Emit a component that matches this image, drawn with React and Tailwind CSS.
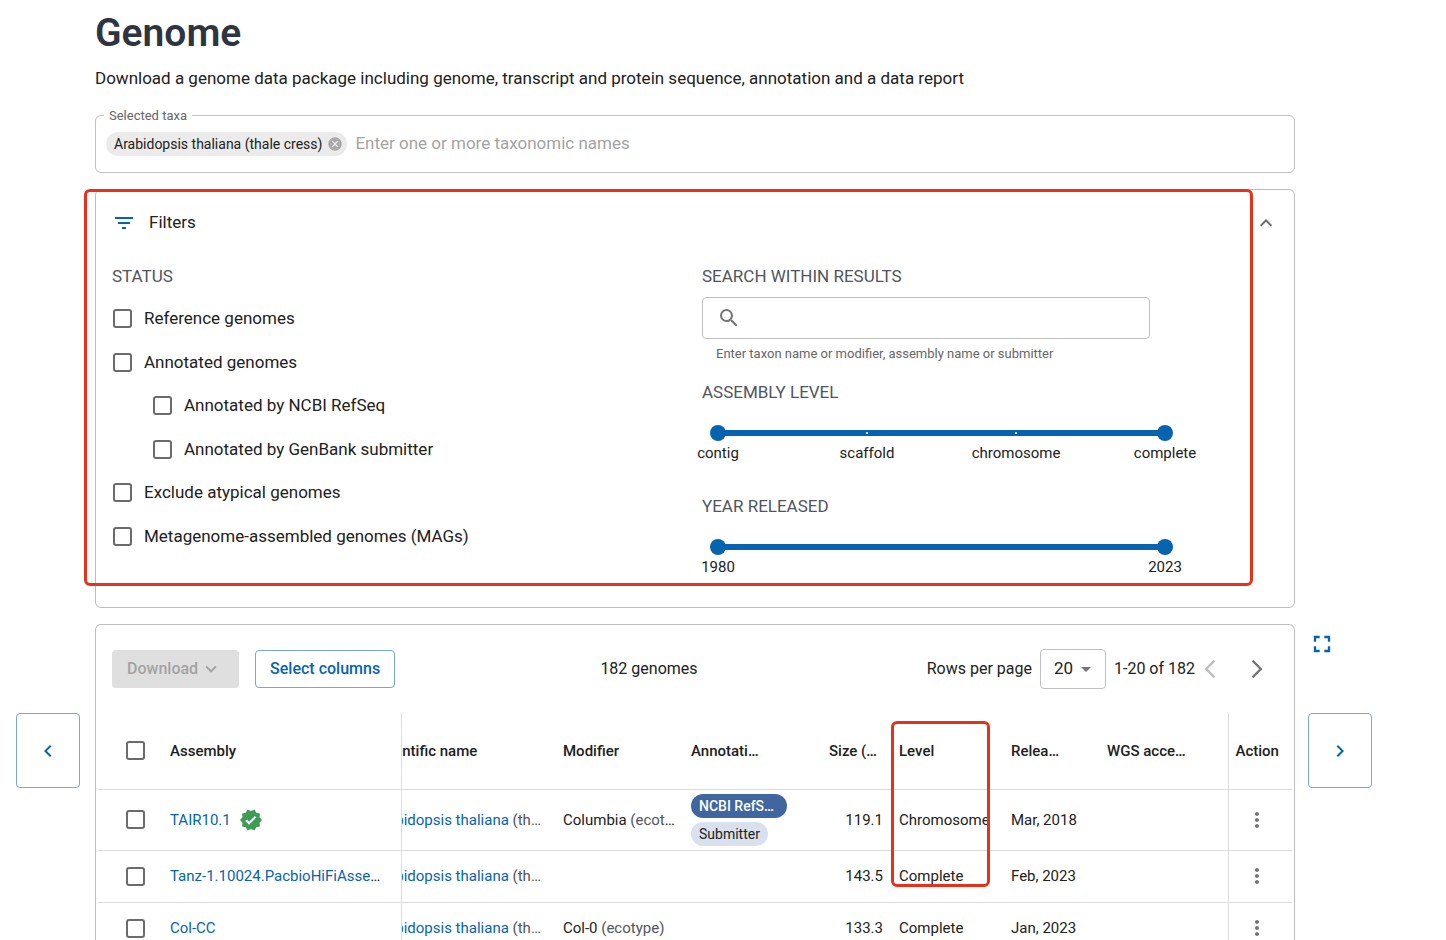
import {
  MdArrowBackIosNew,
  MdArrowDropDown,
  MdArrowForwardIos,
  MdCancel,
  MdFilterList,
  MdFullscreen,
  MdKeyboardArrowDown,
  MdKeyboardArrowLeft,
  MdKeyboardArrowRight,
  MdKeyboardArrowUp,
  MdMoreVert,
  MdSearch,
  MdVerified,
} from "react-icons/md";

const checkboxClass =
  "block size-[19px] shrink-0 appearance-none rounded-[3px] border-2 border-[#6b6b6b] bg-white checked:bg-[#0663b0]";

const rangeClass =
  "pointer-events-none absolute inset-0 h-4 w-full appearance-none bg-transparent [&::-webkit-slider-thumb]:pointer-events-auto [&::-webkit-slider-thumb]:size-4 [&::-webkit-slider-thumb]:appearance-none [&::-webkit-slider-thumb]:rounded-full [&::-webkit-slider-thumb]:bg-[#0663b0]";

const statusFilters = [
  { id: "reference", label: "Reference genomes" },
  { id: "annotated", label: "Annotated genomes" },
  { id: "refseq", label: "Annotated by NCBI RefSeq", nested: true },
  { id: "genbank", label: "Annotated by GenBank submitter", nested: true },
  { id: "atypical", label: "Exclude atypical genomes" },
  { id: "mags", label: "Metagenome-assembled genomes (MAGs)" },
];

const genomes = [
  {
    assembly: "TAIR10.1",
    verified: true,
    modifier: "Columbia",
    modifierType: "(ecotype)",
    annotations: true,
    size: "119.1",
    level: "Chromosome",
    released: "Mar, 2018",
    height: "h-[61px]",
  },
  {
    assembly: "Tanz-1.10024.PacbioHiFiAssembly",
    size: "143.5",
    level: "Complete",
    released: "Feb, 2023",
    height: "h-[52px]",
  },
  {
    assembly: "Col-CC",
    modifier: "Col-0",
    modifierType: "(ecotype)",
    size: "133.3",
    level: "Complete",
    released: "Jan, 2023",
    height: "h-[52px]",
  },
];

function RangeSlider({ name, min, max, labels, ticks }) {
  return (
    <div className="ml-2 max-w-[463px]">
      <div className="relative flex h-4 items-center px-2">
        <div className="flex h-1.5 w-full items-center justify-between bg-[#0663b0]">
          {ticks && labels.map((l) => <span key={l} className="size-0.5 bg-white/80" />)}
        </div>
        <input type="range" aria-label={name + " from"} min={min} max={max} defaultValue={min} className={rangeClass} />
        <input type="range" aria-label={name + " to"} min={min} max={max} defaultValue={max} className={rangeClass} />
      </div>
      <div className="mt-0.5 flex justify-between px-2">
        {labels.map((l) => (
          <span key={l} className="flex w-0 justify-center text-[15px] leading-5 whitespace-nowrap">
            {l}
          </span>
        ))}
      </div>
    </div>
  );
}

function Filters() {
  return (
    <section className="relative mt-4 rounded-md border border-[#bdbdbd] px-4 pb-[30px]">
      <div className="flex h-[66px] items-center justify-between">
        <h2 className="flex items-center gap-[13px] text-[17px]">
          <MdFilterList className="size-6 text-[#0663b0]" />
          Filters
        </h2>
        <button aria-label="Collapse filters" className="text-[#6b6b6b]">
          <MdKeyboardArrowUp className="size-6" />
        </button>
      </div>
      <div className="grid grid-cols-2 gap-3.5 pt-2">
        <fieldset>
          <legend className="text-[17px] leading-6 text-[#505560]">STATUS</legend>
          <div className="mt-[9px] grid h-[261px] grid-rows-6 pl-px">
            {statusFilters.map((f) => (
              <div key={f.id} className={f.nested ? "flex items-center gap-3 pl-10" : "flex items-center gap-3"}>
                <input id={f.id} type="checkbox" className={checkboxClass} />
                <label htmlFor={f.id} className="text-[17px]">
                  {f.label}
                </label>
              </div>
            ))}
          </div>
        </fieldset>
        <div>
          <label htmlFor="search" className="block text-[17px] leading-6 text-[#505560]">
            SEARCH WITHIN RESULTS
          </label>
          <div className="mt-[9px] flex h-[42px] max-w-md items-center gap-2 rounded border border-[#c0c0c0] px-3.5">
            <MdSearch className="size-6 text-[#757575]" />
            <input id="search" type="text" className="min-w-0 flex-1 outline-none" />
          </div>
          <p className="mt-[5px] pl-3.5 text-[13px] leading-5 text-[#666]">
            Enter taxon name or modifier, assembly name or submitter
          </p>
          <h3 className="mt-4 text-[17px] leading-6 text-[#505560]">ASSEMBLY LEVEL</h3>
          <div className="mt-[21px]">
            <RangeSlider name="Assembly level" min={0} max={3} ticks labels={["contig", "scaffold", "chromosome", "complete"]} />
          </div>
          <h3 className="mt-[31px] text-[17px] leading-6 text-[#505560]">YEAR RELEASED</h3>
          <div className="mt-[21px]">
            <RangeSlider name="Year released" min={1980} max={2023} labels={["1980", "2023"]} />
          </div>
        </div>
      </div>
      <div className="pointer-events-none absolute -top-px right-[41px] bottom-[21px] -left-3 rounded-md border-3 border-[#e8301a]" />
    </section>
  );
}

function Toolbar() {
  return (
    <div className="flex h-[88px] items-center px-4">
      <button
        disabled
        className="flex h-[38px] items-center gap-0.5 rounded bg-[#dfdfdf] pr-[17px] pl-[15px] text-base font-medium text-[#a3a3a3]"
      >
        Download
        <MdKeyboardArrowDown className="size-[22px]" />
      </button>
      <button className="ml-4 h-[38px] rounded border border-[#77a7d3] px-3.5 text-base font-medium text-[#0663b0]">
        Select columns
      </button>
      <p className="flex-1 pr-6 text-center text-base">182 genomes</p>
      <label htmlFor="rows" className="text-base">
        Rows per page
      </label>
      <div className="relative ml-2 flex items-center">
        <select
          id="rows"
          className="h-10 w-[66px] appearance-none rounded border border-[#c0c0c0] bg-white pl-[13px] text-[17px]"
        >
          <option>20</option>
          <option>50</option>
          <option>100</option>
        </select>
        <MdArrowDropDown className="pointer-events-none absolute right-2 size-6 text-[#757575]" />
      </div>
      <span className="ml-2 text-base">1-20 of 182</span>
      <button aria-label="Previous rows" disabled className="ml-1 text-[#bdbdbd]">
        <MdArrowBackIosNew className="size-[22px]" />
      </button>
      <button aria-label="Next rows" className="mr-2.5 ml-[25px] text-[#757575]">
        <MdArrowForwardIos className="size-[22px]" />
      </button>
    </div>
  );
}

function GenomeTable() {
  return (
    <table className="w-full table-fixed text-left text-[15px] leading-5">
      <colgroup>
        <col className="w-16" />
        <col className="w-[239px]" />
        <col className="w-[154px]" />
        <col className="w-32" />
        <col className="w-32" />
        <col className="w-20" />
        <col className="w-28" />
        <col className="w-24" />
        <col />
        <col className="w-16" />
      </colgroup>
      <thead>
        <tr className="h-[76px] border-b border-[#dcdcdc] [&>th]:font-medium">
          <th>
            <input type="checkbox" aria-label="Select all" className={checkboxClass + " ml-7"} />
          </th>
          <th className="border-r border-[#dcdcdc] px-2">Assembly</th>
          <th className="overflow-hidden">
            <div className="-ml-7 w-[172px] truncate">Scientific name</div>
          </th>
          <th className="px-2">Modifier</th>
          <th className="px-2">
            <div className="w-[72px] truncate">Annotation</div>
          </th>
          <th className="px-2">
            <div className="ml-auto w-[54px] truncate">Size (Mb)</div>
          </th>
          <th className="relative px-2">
            Level
            <div className="pointer-events-none absolute top-2 left-0 h-[166px] w-[99px] rounded-md border-3 border-[#e8301a]" />
          </th>
          <th className="px-2">
            <div className="w-[52px] truncate">Release date</div>
          </th>
          <th className="px-2">
            <div className="w-[84px] truncate">WGS accession</div>
          </th>
          <th className="border-l border-[#dcdcdc] px-[7px]">Action</th>
        </tr>
      </thead>
      <tbody>
        {genomes.map((g) => (
          <tr key={g.assembly} className={g.height + " border-b border-[#dcdcdc]"}>
            <td>
              <input type="checkbox" aria-label={"Select " + g.assembly} className={checkboxClass + " ml-7"} />
            </td>
            <td className="border-r border-[#dcdcdc] px-2">
              <div className="flex items-center gap-2">
                <div className="max-w-[214px] truncate">
                  <a href="#assembly" className="text-[#0663b0]">
                    {g.assembly}
                  </a>
                </div>
                {g.verified && <MdVerified className="size-6 text-[#3f9b55]" />}
              </div>
            </td>
            <td className="overflow-hidden">
              <div className="-ml-[29px] w-[172px] truncate text-[#505560]">
                <a href="#taxon" className="text-[#0663b0]">
                  Arabidopsis thaliana
                </a>{" "}
                (thale cress)
              </div>
            </td>
            <td className="px-2">
              {g.modifier && (
                <div className="truncate">
                  {g.modifier} <span className="text-[#505560]">{g.modifierType}</span>
                </div>
              )}
            </td>
            <td className="px-2">
              {g.annotations && (
                <div className="flex flex-col items-start gap-1">
                  <span className="w-24 truncate rounded-full bg-[#3f669e] pr-3 pl-2 text-sm leading-6 font-medium text-white">
                    NCBI RefSeq
                  </span>
                  <span className="rounded-full bg-[#d8e1ed] px-2 text-sm leading-6">Submitter</span>
                </div>
              )}
            </td>
            <td className="px-2 text-right">{g.size}</td>
            <td className="px-2">{g.level}</td>
            <td className="px-2">{g.released}</td>
            <td />
            <td className="border-l border-[#dcdcdc]">
              <button aria-label={"Actions for " + g.assembly} className="ml-4 block text-[#757575]">
                <MdMoreVert className="size-6" />
              </button>
            </td>
          </tr>
        ))}
      </tbody>
    </table>
  );
}

const scrollButton = "flex h-[75px] w-16 items-center justify-center rounded border border-[#77a7d3] text-[#0663b0]";

export default function App() {
  return (
    <main className="grid grid-cols-[79px_minmax(0,1fr)_77px] bg-white pr-[74px] pl-4 font-['Roboto',sans-serif] text-[#212121]">
      <div className="col-start-2 pt-[11px]">
        <h1 className="text-[39px] leading-[45px] font-semibold text-[#2e3440]">Genome</h1>
        <p className="mt-2.5 text-[17px] leading-6">
          Download a genome data package including genome, transcript and protein sequence, annotation and a data report
        </p>
        <div className="relative mt-[25px] flex h-[58px] items-center rounded-md border border-[#c0c0c0] pl-2.5">
          <label htmlFor="taxa" className="absolute -top-2 left-2 bg-white px-[5px] text-[13px] leading-4 text-[#666]">
            Selected taxa
          </label>
          <span className="flex h-6 items-center gap-[5px] rounded-full bg-[#ebebeb] pr-1 pl-2 text-sm">
            Arabidopsis thaliana (thale cress)
            <button aria-label="Remove Arabidopsis thaliana" className="text-[#a9a9a9]">
              <MdCancel className="size-4" />
            </button>
          </span>
          <input
            id="taxa"
            type="text"
            placeholder="Enter one or more taxonomic names"
            className="ml-2 min-w-0 flex-1 text-[17px] outline-none placeholder:text-[#a3a3a3]"
          />
        </div>
        <Filters />
      </div>
      <div className="col-start-1 mt-4 pt-[89px]">
        <button aria-label="Scroll left" className={scrollButton}>
          <MdKeyboardArrowLeft className="size-6" />
        </button>
      </div>
      <section className="mt-4 rounded-t-md border border-b-0 border-[#bdbdbd]">
        <Toolbar />
        <div className="px-0.5">
          <GenomeTable />
        </div>
      </section>
      <div className="mt-4 flex flex-col gap-[55px] pt-1.5 pl-[13px]">
        <button aria-label="Full screen" className="self-start text-[#0663b0]">
          <MdFullscreen className="size-7" />
        </button>
        <button aria-label="Scroll right" className={scrollButton}>
          <MdKeyboardArrowRight className="size-6" />
        </button>
      </div>
    </main>
  );
}
